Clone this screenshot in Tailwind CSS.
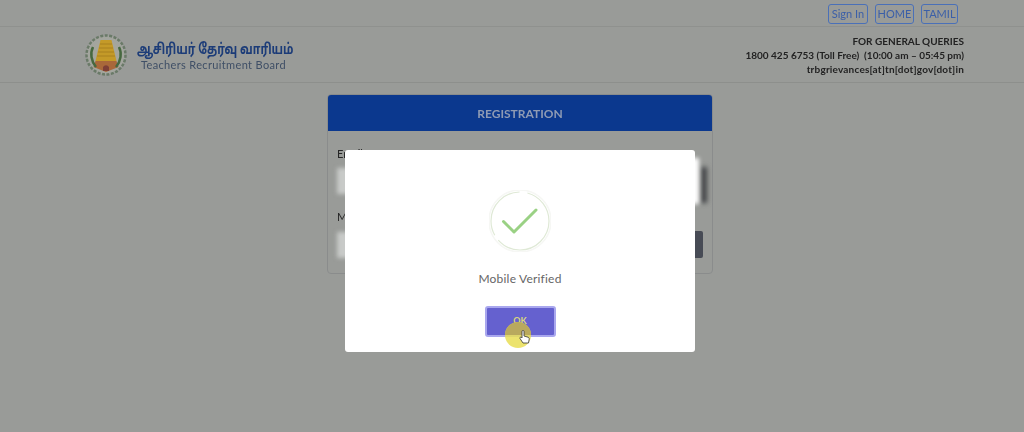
<!DOCTYPE html>
<html lang="en"><head><meta charset="utf-8"><script src="https://cdn.jsdelivr.net/npm/@tailwindcss/browser@4"></script><title>TRB</title></head>
<body class="m-0">
<div class="relative w-[1024px] h-[432px] overflow-hidden bg-[#999b98] font-['Lato','Open_Sans',sans-serif]">
  <div class="h-full blur-[0.5px]">
    <div class="h-[27px] flex justify-end items-start gap-[7px] pt-[4px] pr-[66px] border-b border-[#8f918e] text-[11px] text-[#3b5fa8]">
      <span class="w-[40px] h-[20px] flex items-center justify-center border border-[#4a70b8] rounded-[3px]">Sign In</span>
      <span class="w-[39px] h-[20px] flex items-center justify-center border border-[#4a70b8] rounded-[3px]">HOME</span>
      <span class="w-[37px] h-[20px] flex items-center justify-center border border-[#4a70b8] rounded-[3px]">TAMIL</span>
    </div>
    <div class="h-[56px] flex justify-between items-center pl-[85px] pr-[60px] border-b border-[#8d8f8c]">
      <div class="flex items-center gap-[10px]">
        <svg width="42" height="44" viewBox="0 0 42 44">
          <circle cx="21" cy="22" r="19.500" fill="#a3a59e" stroke="#6a7a68" stroke-width="2.500" stroke-dasharray="3 1.500"/>
          <circle cx="21" cy="22" r="15" fill="#a5a69d"/>
          <path d="M15.500 7h11l5 21H10.500z" fill="#c49a28"/>
          <path d="M15 11h12M14 15h14M13 19h16M12 23h18" stroke="#a8801f" stroke-width="1"/>
          <path d="M10.500 28h21l2 6-12.500 5-12.500-5z" fill="#a9683a"/>
          <path d="M18 34a3.500 3.500 0 0 1 6 0v4h-6z" fill="#7e3f36"/>
          <path d="M8 14c-3 6-2 14 3 20M34 14c3 6 2 14-3 20" stroke="#46683f" stroke-width="2.500" fill="none"/>
        </svg>
        <div class="flex flex-col">
          <span class="inline-block origin-left scale-x-[0.74] whitespace-nowrap text-[15px] leading-[20px] font-bold text-[#1c3c78] font-['Noto_Sans','Noto_Sans_Tamil','Lohit_Tamil',sans-serif]">ஆசிரியர் தேர்வு வாரியம்</span>
          <span class="ml-[4px] text-[11px] leading-[14px] tracking-[0.35px] text-[#3f4f66]">Teachers Recruitment Board</span>
        </div>
      </div>
      <div class="text-right text-[10px] leading-[14px] font-bold text-[#222]">
        <p>FOR GENERAL QUERIES</p>
        <p class="whitespace-pre">1800 425 6753 (Toll Free)  (10:00 am – 05:45 pm)</p>
        <p class="tracking-[0.2px]">trbgrievances[at]tn[dot]gov[dot]in</p>
      </div>
    </div>
    <div class="w-[386px] h-[180px] mx-auto mt-[11px] translate-x-[8px] border border-[#8a8c8c] rounded-[4px] overflow-hidden">
      <div class="h-[36px] pt-[1px] bg-[#0b388e] flex items-center justify-center text-[#8f9bb4] text-[12px] font-bold">REGISTRATION</div>
      <div class="px-[9px] pt-[16px] text-[11px] text-[#262626]">
        <p class="leading-[14px]">Email</p>
        <div class="mt-[6px] h-[27px] w-full flex justify-between items-center">
          <div class="w-[14px] h-[26px] bg-[#c8cac8] blur-[2px]"></div>
        </div>
        <p class="mt-[16px] leading-[14px]">Mobile</p>
        <div class="mt-[7px] h-[27px] w-full flex justify-between items-center">
          <div class="w-[14px] h-[26px] bg-[#c8cac8] blur-[2px]"></div>
          <div class="w-[40px] h-[27px] bg-[#474b55] rounded-r-[2px]"></div>
        </div>
      </div>
    </div>
  </div>

  <div class="absolute left-[701px] top-[167px] w-[6px] h-[36px] bg-[#3f4144] blur-[2.500px]"></div>
  <div class="absolute left-[345px] top-[150px] w-[350px] h-[202px] bg-white rounded-[3px] flex flex-col items-center">
    <svg class="mt-[40px]" width="62" height="62" viewBox="0 0 62 62">
      <circle cx="31" cy="31" r="29" fill="none" stroke="#dfe9d6" stroke-width="1.200" stroke-dasharray="70 6 60 8"/>
      <circle cx="31" cy="31" r="31" fill="none" stroke="#f6f7f4" stroke-width="1.500"/>
      <path d="M14.500 31.500 25 42 47 20" fill="none" stroke="#9ad184" stroke-width="3" stroke-linecap="round" stroke-linejoin="round"/>
    </svg>
    <p class="mt-[18px] text-[12px] leading-[18px] tracking-[0.2px] text-[#666]">Mobile Verified</p>
    <div class="relative mt-[18px] w-[71px] h-[31px] rounded-[3px] bg-[#6561cf] border-2 border-[#a9a7ee] flex items-start justify-center pt-[6px] text-[9px] font-bold text-[#d8d57e]">OK
      <span class="absolute left-[18px] top-[14px] w-[26px] h-[26px] rounded-full bg-[#e9de55]/85"></span>
      <span class="absolute left-[18px] top-[14px] w-[26px] h-[13px] overflow-hidden"><span class="block w-[26px] h-[26px] rounded-full bg-[#b9a95e]"></span></span>
      <svg class="absolute left-[32px] top-[22px]" width="11" height="15" viewBox="0 0 11 15"><path d="M3 1.500a1 1 0 0 1 2 0V6l4 1.200c1 .4 1.300 1 1.200 2L9.500 13H4L1 8.500c-.5-1 .7-1.800 1.500-1L3 8z" fill="#fff" stroke="#333" stroke-width="0.800"/></svg>
    </div>
  </div>
  <div class="absolute left-[691px] top-[158px] w-[8px] h-[46px] bg-white blur-[2px]"></div>
</div>
</body></html>
